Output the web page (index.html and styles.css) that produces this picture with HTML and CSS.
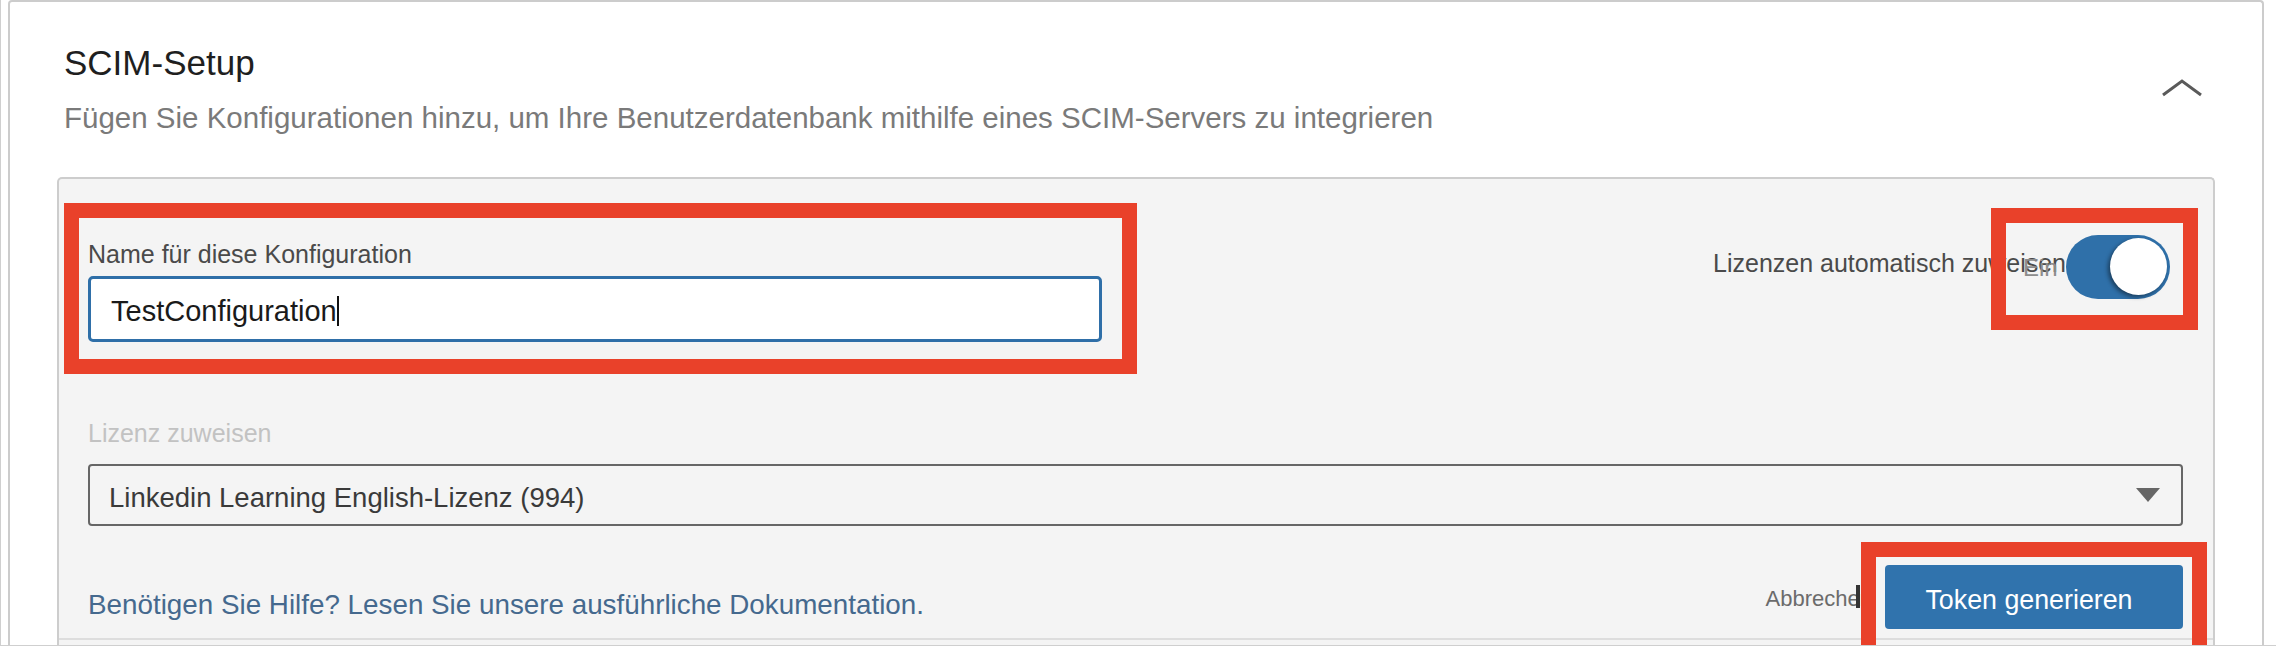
FILE: index.html
```html
<!DOCTYPE html>
<html lang="de">
<head>
<meta charset="utf-8">
<title>SCIM-Setup</title>
<link rel="stylesheet" href="styles.css">
</head>
<body>
<div class="frame">
  <section class="card">
    <header class="card-head">
      <div class="head-text">
        <h2 class="title">SCIM-Setup</h2>
        <p class="subtitle">Fügen Sie Konfigurationen hinzu, um Ihre Benutzerdatenbank mithilfe eines SCIM-Servers zu integrieren</p>
      </div>
      <button class="collapse" type="button" aria-label="Einklappen">
        <svg width="42" height="19" viewBox="0 0 42 19"><polyline points="2,17 21,3 40,17" fill="none" stroke="#5a5a5a" stroke-width="3"/></svg>
      </button>
    </header>

    <div class="panel">
      <div class="row-top">
        <div class="name-field">
          <label class="field-label">Name für diese Konfiguration</label>
          <div class="text-input">TestConfiguration<span class="caret"></span></div>
        </div>
        <div class="auto-assign">
          <span class="auto-label">Lizenzen automatisch zuweisen</span>
          <span class="switch"><span class="knob"></span></span>
        </div>
      </div>

      <div class="license-field">
        <label class="field-label muted">Lizenz zuweisen</label>
        <div class="select">
          <span>Linkedin Learning English-Lizenz (994)</span>
          <span class="arrow"></span>
        </div>
      </div>

      <div class="actions">
        <a class="help" href="#">Benötigen Sie Hilfe? Lesen Sie unsere ausführliche Dokumentation.</a>
        <div class="buttons">
          <span class="cancel">Abbrechen</span>
          <button class="primary" type="button">Token generieren</button>
        </div>
      </div>
      <div class="panel-foot"></div>

      <span class="switch-state">Ein</span>
      <span class="ibeam"></span>
      <span class="mark mark-name"></span>
      <span class="mark mark-switch"></span>
      <span class="mark mark-button"></span>
    </div>
  </section>
</div>
</body>
</html>
```

FILE: styles.css
```css
html, body {
  margin: 0;
  padding: 0;
  overflow: hidden;
  background: #ffffff;
}

body {
  font-family: "Liberation Sans", Arial, sans-serif;
}

.frame {
  box-sizing: border-box;
  height: 646px;
  border-left: 1px solid #cfcfcf;
  border-bottom: 1px solid #cfcfcf;
  overflow: hidden;
}

.card {
  margin: 0 12px 0 7px;
  border: 2px solid #cccccc;
  border-bottom: none;
  border-radius: 4px 4px 0 0;
  padding: 41px 47px 0 47px;
  background: #ffffff;
  min-height: 700px;
}

.card-head {
  display: flex;
  justify-content: space-between;
  align-items: flex-start;
  padding-left: 7px;
}

.title {
  margin: 0;
  font-size: 35px;
  line-height: 40px;
  font-weight: normal;
  color: #1f1f1f;
}

.subtitle {
  margin: 18px 0 0 0;
  font-size: 29.5px;
  line-height: 34px;
  color: #7a7a7a;
}

.collapse {
  margin: 35px 12px 0 0;
  padding: 0;
  border: none;
  background: none;
  width: 42px;
  height: 19px;
}

.collapse svg {
  display: block;
}

.panel {
  position: relative;
  margin-top: 42px;
  border: 2px solid #cdcdcd;
  border-bottom: none;
  border-radius: 5px 5px 0 0;
  background: #f4f4f4;
  padding: 56px 30px 0 29px;
  min-height: 520px;
}

.row-top {
  display: flex;
  justify-content: space-between;
  align-items: flex-start;
}

.name-field {
  padding-top: 5px;
  width: 1014px;
}

.field-label {
  display: block;
  font-size: 25px;
  line-height: 28px;
  color: #4a4a4a;
  margin-bottom: 8px;
}

.field-label.muted {
  color: #c2c2c2;
  margin-bottom: 17px;
}

.text-input {
  box-sizing: border-box;
  height: 66px;
  border: 3px solid #2f6fa8;
  border-radius: 5px;
  background: #ffffff;
  padding: 5px 0 0 20px;
  line-height: 54px;
  font-size: 29px;
  color: #1a1a1a;
}

.caret {
  display: inline-block;
  width: 2px;
  height: 30px;
  background: #111111;
  vertical-align: -5px;
}

.auto-assign {
  display: flex;
  align-items: center;
  margin-right: 13px;
}

.auto-label {
  font-size: 25px;
  line-height: 28px;
  color: #4a4a4a;
  margin-bottom: 9px;
}

.switch {
  position: relative;
  display: block;
  width: 104px;
  height: 64px;
  border-radius: 32px;
  background: #2f70a9;
}

.knob {
  position: absolute;
  left: 44px;
  top: 3px;
  width: 57px;
  height: 57px;
  border-radius: 50%;
  background: #ffffff;
  box-shadow: -2px 2px 4px rgba(0, 0, 0, 0.45);
}

.license-field {
  margin-top: 77px;
}

.select {
  box-sizing: border-box;
  height: 62px;
  border: 2px solid #666666;
  border-radius: 4px;
  display: flex;
  justify-content: space-between;
  align-items: flex-start;
  padding: 6px 21px 0 19px;
  line-height: 52px;
  font-size: 27.5px;
  color: #3a3a3a;
}

.arrow {
  margin-top: 16px;
  width: 0;
  height: 0;
  border-left: 12px solid transparent;
  border-right: 12px solid transparent;
  border-top: 14px solid #666666;
}

.actions {
  margin-top: 39px;
  display: flex;
  justify-content: space-between;
  align-items: center;
}

.help {
  margin-top: 15px;
  font-size: 27.8px;
  line-height: 32px;
  color: #45698e;
  text-decoration: none;
}

.buttons {
  display: flex;
  align-items: center;
  gap: 13px;
}

.cancel {
  font-size: 22px;
  line-height: 26px;
  color: #6b6b6b;
  margin-top: 3px;
}

.primary {
  width: 298px;
  height: 64px;
  border: none;
  border-radius: 4px;
  background: #3073ad;
  color: #ffffff;
  font-family: "Liberation Sans", Arial, sans-serif;
  font-size: 26.8px;
  padding: 6px 10px 0 0;
}

.panel-foot {
  margin-top: 9px;
  border-top: 2px solid #dddddd;
  margin-left: -29px;
  margin-right: -30px;
  height: 40px;
}

.switch-state {
  position: absolute;
  left: 1964px;
  top: 77px;
  font-size: 24px;
  line-height: 24px;
  color: #8c8c8c;
}

.ibeam {
  position: absolute;
  left: 1797px;
  top: 406px;
  width: 4px;
  height: 23px;
  background: #333333;
}

.mark {
  position: absolute;
  box-sizing: border-box;
  border: 15px solid #e9412a;
}

.mark-name {
  left: 5px;
  top: 24px;
  width: 1073px;
  height: 171px;
}

.mark-switch {
  left: 1932px;
  top: 29px;
  width: 207px;
  height: 122px;
}

.mark-button {
  left: 1802px;
  top: 363px;
  width: 346px;
  height: 140px;
}
```
